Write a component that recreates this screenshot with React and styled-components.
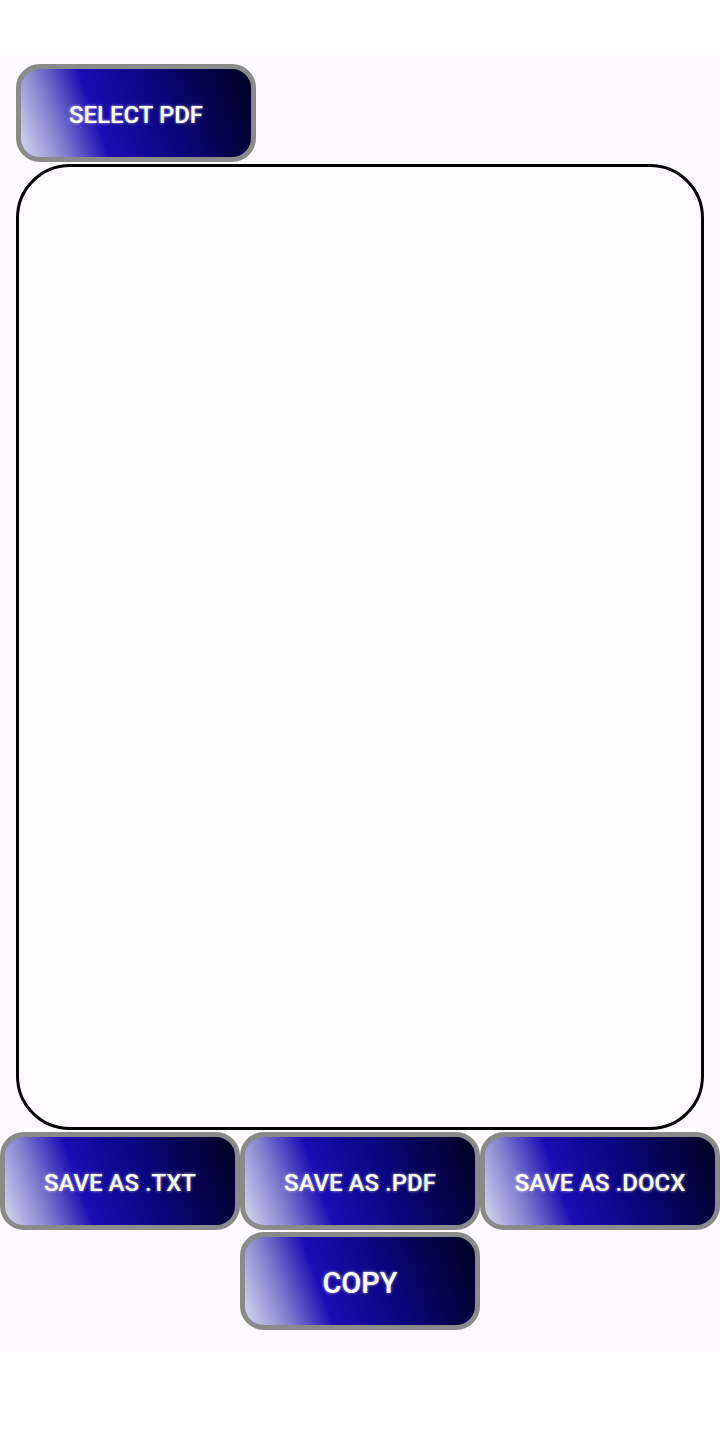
import React from 'react'
import styled, { createGlobalStyle } from 'styled-components'

const GlobalStyle = createGlobalStyle`
  body {
    margin: 0;
    background: #ffffff;
    font-family: Roboto, "Noto Sans", sans-serif;
  }
`

const App = () => {
  return (
    <>
      <GlobalStyle />
      <Screen>
        <TopBar>
          <GlossButton>SELECT PDF</GlossButton>
        </TopBar>
        <TextArea />
        <ButtonRow>
          <GlossButton>SAVE AS .TXT</GlossButton>
          <GlossButton>SAVE AS .PDF</GlossButton>
          <GlossButton>SAVE AS .DOCX</GlossButton>
        </ButtonRow>
        <ButtonRow>
          <GlossButton big>COPY</GlossButton>
        </ButtonRow>
      </Screen>
    </>
  )
}

export default App

const Screen = styled.div`
  margin-top: 50px;
  height: 1302px;
  background: #fdfbfe;
  display: flex;
  flex-direction: column;
  box-sizing: border-box;
  padding-top: 14px;
`

const TopBar = styled.div`
  display: flex;
  padding: 0 16px;
  margin-bottom: 2px;
`

const GlossButton = styled.button`
  width: 240px;
  height: 98px;
  box-sizing: border-box;
  border: 5px solid #8a8a8a;
  border-radius: 24px;
  background: linear-gradient(70deg, #d8d8f0 0%, #8480d0 17%, #1c0cb2 34%, #0c0580 60%, #00001c 100%);
  color: #ffffff;
  font-family: Roboto, "Noto Sans", sans-serif;
  font-weight: 500;
  font-size: ${p => (p.big ? '29px' : '24px')};
  text-shadow: 0 0 3px rgba(255, 255, 255, 0.75);
  display: flex;
  align-items: center;
  justify-content: center;
  padding: 3px 0 0;
  cursor: pointer;
`

const TextArea = styled.div`
  margin: 0 16px;
  height: 966px;
  box-sizing: border-box;
  border: 3px solid #000000;
  border-radius: 54px;
  background: #fffdff;
`

const ButtonRow = styled.div`
  display: flex;
  justify-content: center;
  margin-top: 2px;
  &:first-of-type {
    margin-top: 0;
  }
`
